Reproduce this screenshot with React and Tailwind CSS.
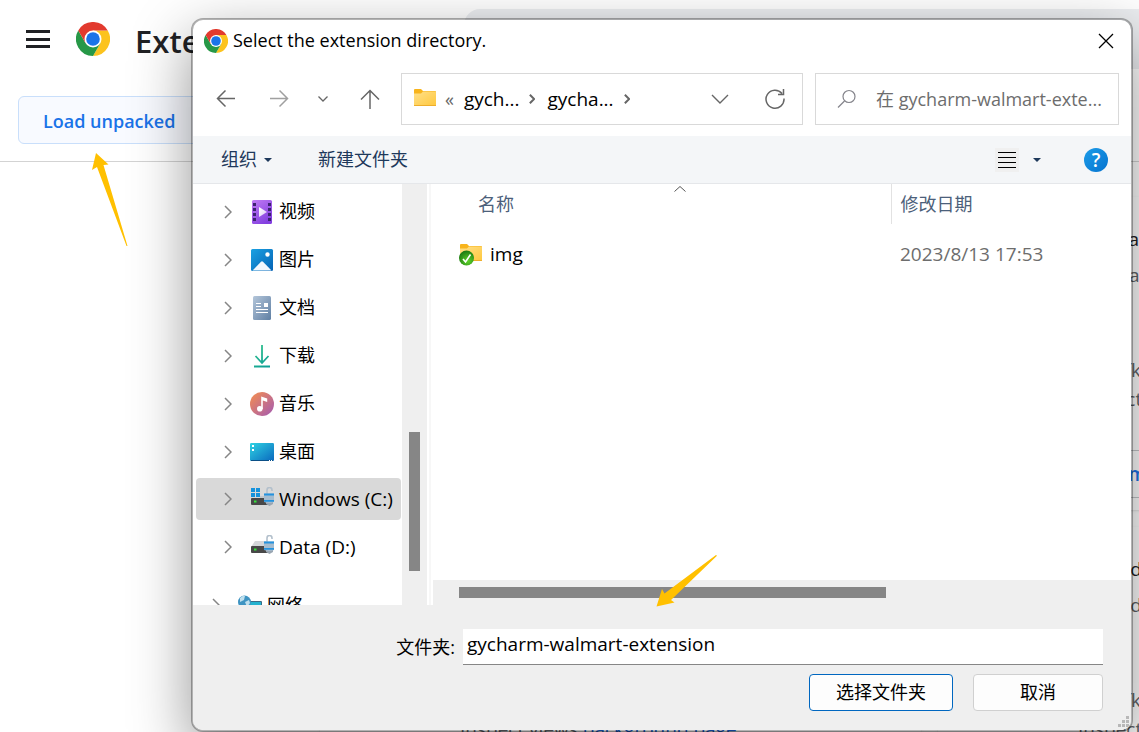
import { useState } from "react";

function ChromeLogo({ className }) {
  return (
    <svg viewBox="0 0 48 48" className={className} aria-hidden="true">
      <path d="M24 12h20.8A24 24 0 0 1 24 48l10.4-18z" fill="#fcc31e" />
      <path d="M24 48A24 24 0 0 1 3.2 12l10.4 18h20.8z" fill="#279847" />
      <path d="M44.8 12A24 24 0 0 0 3.2 12l10.4 18L24 12z" fill="#e23a2e" />
      <circle cx="24" cy="24" r="12" fill="#fff" />
      <circle cx="24" cy="24" r="9.6" fill="#1a73e8" />
    </svg>
  );
}

function Chevron({ className, weight = 1.5 }) {
  return (
    <svg viewBox="0 0 8 14" className={className} fill="none" stroke="currentColor" strokeWidth={weight} aria-hidden="true">
      <path d="M1 1l6 6-6 6" />
    </svg>
  );
}

function Caret() {
  return (
    <svg viewBox="0 0 8 4" className="h-1 w-2" aria-hidden="true">
      <path d="M0 0h8L4 4z" fill="#1e395b" />
    </svg>
  );
}

function FolderIcon({ checked }) {
  return (
    <svg viewBox="0 0 24 24" className="size-6 shrink-0" aria-hidden="true">
      <defs>
        <linearGradient id="folder" x1="0" y1="0" x2="1" y2="1">
          <stop offset="0" stopColor="#ffe08a" />
          <stop offset="1" stopColor="#ffc83d" />
        </linearGradient>
        <radialGradient id="synced" cx=".6" cy=".7" r=".7">
          <stop offset="0" stopColor="#5fd32a" />
          <stop offset="1" stopColor="#1c7a12" />
        </radialGradient>
      </defs>
      <path d="M1 3q0-1 1-1h6l2 2h12q1 0 1 1v4H1z" fill="#f8b41c" />
      <path d="M1 6.500h7L10 4.500h12q1 0 1 1V18q0 1-1 1H2q-1 0-1-1z" fill="url(#folder)" />
      <path d="M1 18.500h22" stroke="#eeae2c" />
      {checked && (
        <>
          <circle cx="7.500" cy="16" r="7.500" fill="url(#synced)" />
          <path d="M4 17l2.500 3 5-7.500" fill="none" stroke="#fff" strokeWidth="1.600" />
        </>
      )}
    </svg>
  );
}

function VideoIcon() {
  return (
    <svg viewBox="0 0 24 24" className="size-6" aria-hidden="true">
      <defs>
        <linearGradient id="video" x1="0" y1="0" x2=".6" y2="1">
          <stop offset="0" stopColor="#c07bf3" />
          <stop offset="1" stopColor="#8440e0" />
        </linearGradient>
        <linearGradient id="play" x1="0" y1="0" x2="1" y2="1">
          <stop offset="0" stopColor="#fff" />
          <stop offset="1" stopColor="#dcc6f6" />
        </linearGradient>
      </defs>
      <rect x="2" width="20" height="24" rx="1.500" fill="url(#video)" />
      <path d="M4.500 3v20M19.500 3v20" stroke="#3c2370" strokeWidth="3" strokeDasharray="3 2" />
      <path d="M9 7l8 5-8 5z" fill="url(#play)" />
    </svg>
  );
}

function PictureIcon() {
  return (
    <svg viewBox="0 0 24 24" className="size-6" aria-hidden="true">
      <defs>
        <linearGradient id="sky" x1="0" y1="0" x2="1" y2="1">
          <stop offset="0" stopColor="#1ba1e2" />
          <stop offset="1" stopColor="#0563b5" />
        </linearGradient>
      </defs>
      <rect x="1" y="1" width="22" height="22" rx="1.500" fill="url(#sky)" />
      <path d="M2.500 22.500l8.500-8.800q1-1 2 0l8.500 8.800z" fill="#f2f7fd" />
      <circle cx="17.500" cy="6.500" r="2.200" fill="#fff" />
    </svg>
  );
}

function DocumentIcon() {
  return (
    <svg viewBox="0 0 24 24" className="size-6" aria-hidden="true">
      <defs>
        <linearGradient id="doc" x1="0" y1="0" x2="1" y2="1">
          <stop offset="0" stopColor="#b4c6da" />
          <stop offset="1" stopColor="#5f7fa3" />
        </linearGradient>
      </defs>
      <rect x="3" width="18" height="24" rx="1.500" fill="url(#doc)" />
      <path d="M6 7.500h5M6 10.500h5M6 13.500h12M6 16.500h12" stroke="#fff" />
      <rect x="14" y="7" width="4" height="4" fill="#fff" />
    </svg>
  );
}

function DownloadIcon() {
  return (
    <svg viewBox="0 0 24 24" className="size-6" fill="none" strokeWidth="1.800" aria-hidden="true">
      <defs>
        <linearGradient id="down" gradientUnits="userSpaceOnUse" x1="4" y1="1" x2="20" y2="23">
          <stop offset="0" stopColor="#35c48d" />
          <stop offset="1" stopColor="#0b9d96" />
        </linearGradient>
      </defs>
      <path d="M12 1v17.500M5.500 12l6.500 7 6.500-7M4 22.500h16" stroke="url(#down)" />
    </svg>
  );
}

function MusicIcon() {
  return (
    <svg viewBox="0 0 24 24" className="size-6" aria-hidden="true">
      <defs>
        <linearGradient id="music" x1="0" y1="0" x2="1" y2="1">
          <stop offset=".1" stopColor="#ee8a58" />
          <stop offset=".9" stopColor="#ab5fa9" />
        </linearGradient>
      </defs>
      <circle cx="12" cy="12" r="12" fill="url(#music)" />
      <circle cx="9.800" cy="16.800" r="2.800" fill="#fff" />
      <path d="M11.200 17V4.500l6 2v3.500l-4.400-1.500V17z" fill="#fff" />
    </svg>
  );
}

function DesktopIcon() {
  return (
    <svg viewBox="0 0 24 24" className="size-6" aria-hidden="true">
      <defs>
        <linearGradient id="desk" x1="0" y1="0" x2="1" y2="1">
          <stop offset="0" stopColor="#2fd3e3" />
          <stop offset="1" stopColor="#0a68be" />
        </linearGradient>
      </defs>
      <rect y="3" width="24" height="18" rx="1.200" fill="url(#desk)" />
      <path d="M2 5h2v2H2zM2 9h2v2H2z" fill="#fff" />
      <path d="M1 20.500h22" stroke="#0b4f86" />
      <path d="M19 20h1v1h-1zM21 20h1v1h-1z" fill="#fff" />
    </svg>
  );
}

function DriveIcon({ system }) {
  return (
    <svg viewBox="0 0 24 24" className="size-6" aria-hidden="true">
      {system ? (
        <>
          <path d="M10 9h8l3 3H1v-1h9z" fill="#c4c7ca" />
          <path d="M1 1h4v4H1zM6 1h4v4H6zM1 6h4v4H1zM6 6h4v4H6z" fill="#1592dc" />
        </>
      ) : (
        <path d="M5 6h12l6 6H1z" fill="#d5d7da" />
      )}
      <rect x="1" y="11" width="19" height="7" rx="1" fill="#484848" />
      <rect x="4" y="13.500" width="2.500" height="2" fill="#35e43a" />
      <path d="M17 8V3q0-2.500 2.500-2.500T22 3v1" fill="none" stroke="#b3c0cc" strokeWidth="1.600" />
      <path d="M16 14h7v3l-3.500 2L16 17z" fill="#9aa6b2" />
      <path d="M14 7.500q0-1 1-1h9V15q-4.500 2-10 0z" fill="#a5bccf" />
      <path d="M14 7.500h10M14 13.800h10" stroke="#2492de" strokeWidth="1.800" />
    </svg>
  );
}

function NetworkIcon() {
  return (
    <svg viewBox="0 0 24 24" className="size-6" aria-hidden="true">
      <rect x="6" y="8" width="18" height="13" rx="1" fill="#3b6b87" />
      <rect x="7" y="9" width="16" height="11" fill="#23b2cf" />
      <circle cx="6.500" cy="9" r="6.500" fill="#3f94c2" />
      <path d="M2 5q3-3 5-2l-1 4-4 2zM7 9l4-2 1 3-3 4z" fill="#c0e0ee" />
    </svg>
  );
}

const folders = [
  { name: "视频", icon: <VideoIcon /> },
  { name: "图片", icon: <PictureIcon /> },
  { name: "文档", icon: <DocumentIcon /> },
  { name: "下载", icon: <DownloadIcon /> },
  { name: "音乐", icon: <MusicIcon /> },
  { name: "桌面", icon: <DesktopIcon /> },
];

const drives = [
  { name: "Windows (C:)", icon: <DriveIcon system />, selected: true },
  { name: "Data (D:)", icon: <DriveIcon /> },
];

function TreeItem({ item, className }) {
  return (
    <li className={`flex h-[42px] items-center rounded-sm pl-7 ${className}`}>
      <Chevron className="mr-[18px] h-3.5 w-2 text-[#868686]" />
      {item.icon}
      <a href="#tree" className="ml-[5px]">
        {item.name}
      </a>
    </li>
  );
}

function ExtensionCard({ title, description, id }) {
  return (
    <article className="flex h-[313px] flex-col overflow-hidden rounded-lg bg-white pl-[140px] text-[19px] leading-7 whitespace-nowrap text-[#5f6368] shadow">
      <h2 className="mt-7 text-[#202124]">{title}</h2>
      <p className="mt-2">{description}</p>
      <p className="mt-[67px]">{id}</p>
      <p className="mt-px">
        Inspect views <a href="#background" className="text-[#1a5fd0]">background page</a>
      </p>
      <button className="mt-auto mb-3 h-12 w-32 shrink-0 rounded border border-[#c4c6c9] font-semibold text-[#1a73e8]">
        Remove
      </button>
    </article>
  );
}

function ExtensionsPage() {
  return (
    <div className="h-screen overflow-hidden">
      <header className="flex h-[78px] items-center pl-[26px]">
        <button aria-label="Main menu" className="flex h-[18px] w-6 flex-col justify-between">
          <span className="h-[3px] w-full bg-[#202124]" />
          <span className="h-[3px] w-full bg-[#202124]" />
          <span className="h-[3px] w-full bg-[#202124]" />
        </button>
        <ChromeLogo className="ml-[26px] size-[34px]" />
        <h1 className="ml-[25px] w-[329px] pt-1 text-[31px] font-semibold text-[#202124]">Extensions</h1>
        <div className="h-[60px] flex-1 rounded-l-2xl bg-[#eceef1]" />
      </header>

      <div className="border-b border-[#d3d3d3] px-[18px] pt-[18px] pb-[17px]">
        <button className="h-12 rounded-md border border-[#c9dffb] bg-[#f8faff] px-6 pt-0.5 text-[18px] font-semibold text-[#1a73e8]">
          Load unpacked
        </button>
      </div>

      <main className="grid grid-cols-[601px_601px] gap-[17px] pt-[35px] pl-80">
        <ExtensionCard title="Upload" description="Upload" id="ID: mfkec" />
        <ExtensionCard title="Walmart" description="Normalize" id="ID: mfkec" />
        <ExtensionCard title="Upload" description="Upload" id="ID: mfkec" />
        <ExtensionCard title="Upload" description="Upload" id="ID: mfkec" />
      </main>
    </div>
  );
}

function FileDialog() {
  const [folder, setFolder] = useState("gycharm-walmart-extension");

  return (
    <section
      role="dialog"
      aria-label="Select the extension directory."
      className="absolute top-[18px] right-1.5 left-[191px] overflow-hidden rounded-xl border-2 border-black/30 bg-white bg-clip-padding text-[18px] text-black shadow-[0_20px_60px_rgba(0,0,0,0.42)]"
    >
      {/* Title bar */}
      <div className="flex h-[41px] items-center pr-[17px] pl-[11px]">
        <ChromeLogo className="size-6" />
        <h2 className="ml-[5px] flex-1">Select the extension directory.</h2>
        <button aria-label="Close">
          <svg viewBox="0 0 16 16" className="size-4" stroke="#000" strokeWidth="1.300">
            <path d="M1 1l14 14M15 1L1 15" />
          </svg>
        </button>
      </div>

      {/* Navigation */}
      <div className="flex items-center gap-3 pt-3 pr-3 pb-[11px]">
        <div className="flex w-49 shrink-0 items-center pl-[23px] text-[#666]">
          <button aria-label="Back" className="mr-[33px]">
            <svg viewBox="0 0 20 20" className="size-5" fill="none" stroke="currentColor" strokeWidth="1.500">
              <path d="M19 9.500H2M9.500 1.500l-8 8 8 8" />
            </svg>
          </button>
          <button aria-label="Forward" className="mr-[29px] text-[#a0a0a0]">
            <svg viewBox="0 0 20 20" className="size-5" fill="none" stroke="currentColor" strokeWidth="1.500">
              <path d="M1 9.500h17M10.500 1.500l8 8-8 8" />
            </svg>
          </button>
          <button aria-label="Recent locations" className="mr-8">
            <svg viewBox="0 0 10 6" className="h-1.5 w-2.5" fill="none" stroke="currentColor" strokeWidth="1.300">
              <path d="M.5.5L5 5 9.500.5" />
            </svg>
          </button>
          <button aria-label="Up">
            <svg viewBox="0 0 20 20" className="size-5" fill="none" stroke="currentColor" strokeWidth="1.500">
              <path d="M10 20V2M1 10.500L10 1.500l9 9" />
            </svg>
          </button>
        </div>

        <div className="flex h-13 flex-1 items-center border border-[#d9d9d9] pr-[17px] pl-[11px] text-[19px] text-[#666]">
          <FolderIcon />
          <span className="ml-2 text-[18px]">«</span>
          <button className="ml-2.5 text-black">gych...</button>
          <Chevron className="ml-2.5 h-2.5 w-1.5" weight={2.8} />
          <button className="ml-3 text-black">gycha...</button>
          <Chevron className="ml-2.5 h-2.5 w-1.5" weight={2.8} />
          <button aria-label="Previous locations" className="mr-9 ml-auto">
            <svg viewBox="0 0 18 10" className="h-2.5 w-[18px]" fill="none" stroke="currentColor" strokeWidth="1.400">
              <path d="M1 1l8 8 8-8" />
            </svg>
          </button>
          <button aria-label="Refresh">
            <svg viewBox="0 0 20 20" className="size-5" fill="none" stroke="currentColor" strokeWidth="1.500">
              <path d="M19 9.500A9 9 0 1 1 17 4.500M18.500 0v5.500H13" />
            </svg>
          </button>
        </div>

        <label className="flex h-13 w-[304px] shrink-0 items-center border border-[#d9d9d9] pr-1 pl-[21px]">
          <svg viewBox="0 0 20 20" className="size-5" fill="none" stroke="#85858c" strokeWidth="1.200" aria-hidden="true">
            <circle cx="12" cy="7.500" r="6" />
            <path d="M7.500 12L1 18.500" />
          </svg>
          <input
            aria-label="Search"
            placeholder="在 gycharm-walmart-exte..."
            className="ml-[19px] w-0 flex-1 outline-none placeholder:text-[#6d6d6d]"
          />
        </label>
      </div>

      {/* Command bar */}
      <div className="flex h-12 items-center border-b border-[#e5e7ea] bg-[#f4f6f8] pr-[23px] pl-7 text-[#1e395b]">
        <button className="flex items-center gap-[7px]">
          组织
          <Caret />
        </button>
        <button className="ml-[46px] flex-1 text-left">新建文件夹</button>
        <button aria-label="Change view" className="mr-3.5 bg-[#f0f0f0] px-[3px] py-1">
          <svg viewBox="0 0 18 16" className="h-4 w-[18px]" stroke="#000">
            <path d="M0 .5h18M0 5.500h18M0 10.500h18M0 15.500h18" />
          </svg>
        </button>
        <button aria-label="More view options">
          <Caret />
        </button>
        <button
          aria-label="Help"
          className="ml-[43px] size-6 rounded-full bg-linear-to-br from-[#1d9ce8] to-[#0673cf] text-[19px] leading-6 font-semibold text-white"
        >
          ?
        </button>
      </div>

      <div className="flex h-[421px]">
        {/* Folder tree */}
        <nav className="w-[209px] shrink-0 overflow-hidden pt-1.5 pr-px pl-[3px] whitespace-nowrap">
          <ul className="flex flex-col gap-1.5">
            {folders.map((f) => (
              <TreeItem key={f.name} item={f} className="pt-px" />
            ))}
            {drives.map((d) => (
              <TreeItem
                key={d.name}
                item={d}
                className={d.selected ? "bg-[#d9d9d9] text-[19px]" : "text-[19px]"}
              />
            ))}
            <li className="mt-2.5 flex h-[42px] items-center pl-4">
              <Chevron className="mr-[18px] h-3.5 w-2 text-[#868686]" />
              <NetworkIcon />
              <a href="#tree" className="ml-[5px]">
                网络
              </a>
            </li>
          </ul>
        </nav>
        <div className="w-[25px] shrink-0 bg-[#efefef] pt-62 pl-[7px]">
          <div className="h-[139px] w-[11px] bg-[#868686]" />
        </div>

        {/* File list */}
        <div className="ml-0.5 flex flex-1 flex-col border-l-2 border-[#f7f7f7] pl-0.5">
          <table className="w-full flex-none text-left">
            <thead>
              <tr className="h-10 text-[#4c607a]">
                <th scope="col" className="relative pl-[45px] font-normal">
                  名称
                  <svg viewBox="0 0 12 6" className="absolute top-0.5 left-[241px] h-1.5 w-3" fill="none" stroke="#555" aria-hidden="true">
                    <path d="M.5 5.500L6 .5l5.500 5" />
                  </svg>
                </th>
                <th scope="col" className="w-60 border-l border-[#e2e2e2] pl-[9px] font-normal">
                  修改日期
                </th>
              </tr>
            </thead>
            <tbody className="text-[19px]">
              <tr className="h-[60px]">
                <td className="pl-[26px]">
                  <span className="flex items-center gap-[7px]">
                    <FolderIcon checked />
                    img
                  </span>
                </td>
                <td className="pl-[9px] text-[#6d6d6d]">2023/8/13 17:53</td>
              </tr>
            </tbody>
          </table>
          <div className="mt-auto h-[25px] bg-[#efefef] pt-[7px] pl-[26px]">
            <div className="h-[11px] w-[427px] bg-[#868686]" />
          </div>
        </div>
      </div>

      {/* Folder name and actions */}
      <div className="relative bg-[#efefef] pt-6 pr-7 pb-[19px]">
        <div className="flex items-center">
          <label htmlFor="folder" className="w-[270px] shrink-0 pr-2 text-right">
            文件夹:
          </label>
          <input
            id="folder"
            value={folder}
            onChange={(e) => setFolder(e.target.value)}
            className="h-9 w-0 flex-1 border-b border-[#868686] bg-white pb-1.5 pl-1 text-[19px] outline-none"
          />
        </div>
        <div className="mt-[9px] flex justify-end gap-5">
          <button className="h-[37px] w-36 rounded border border-[#0067c0] bg-[#fdfdfd]">选择文件夹</button>
          <button className="h-[37px] w-[130px] rounded border border-[#d0d0d0] bg-[#fdfdfd]">取消</button>
        </div>
        <svg viewBox="0 0 12 12" className="absolute right-0.5 bottom-0.5 size-3" fill="#b8b8b8" aria-hidden="true">
          <path d="M9 0h3v3H9zM9 4h3v3H9zM9 8h3v3H9zM5 4h3v3H5zM5 8h3v3H5zM1 8h3v3H1z" />
        </svg>
      </div>
    </section>
  );
}

export default function App() {
  return (
    <div className="relative min-h-screen overflow-hidden bg-white font-['Open_Sans','Noto_Sans_CJK_SC',sans-serif]">
      <ExtensionsPage />
      <FileDialog />

      {/* Pointers at the two steps */}
      <svg viewBox="0 0 36 94" className="absolute top-[153px] left-[92px] h-[94px] w-9" fill="#ffc000" aria-hidden="true">
        <path d="M4 0l12.500 11.500-5 .5L35.500 93h-1L5 14l-5 3z" />
      </svg>
      <svg viewBox="0 0 62 52" className="absolute top-[555px] left-[656px] h-[52px] w-[62px]" fill="#ffc000" aria-hidden="true">
        <path d="M.5 51.500L6 34l2.500 4.500L60 0l1 .8L15 45l3.500 2.500z" />
      </svg>
    </div>
  );
}
